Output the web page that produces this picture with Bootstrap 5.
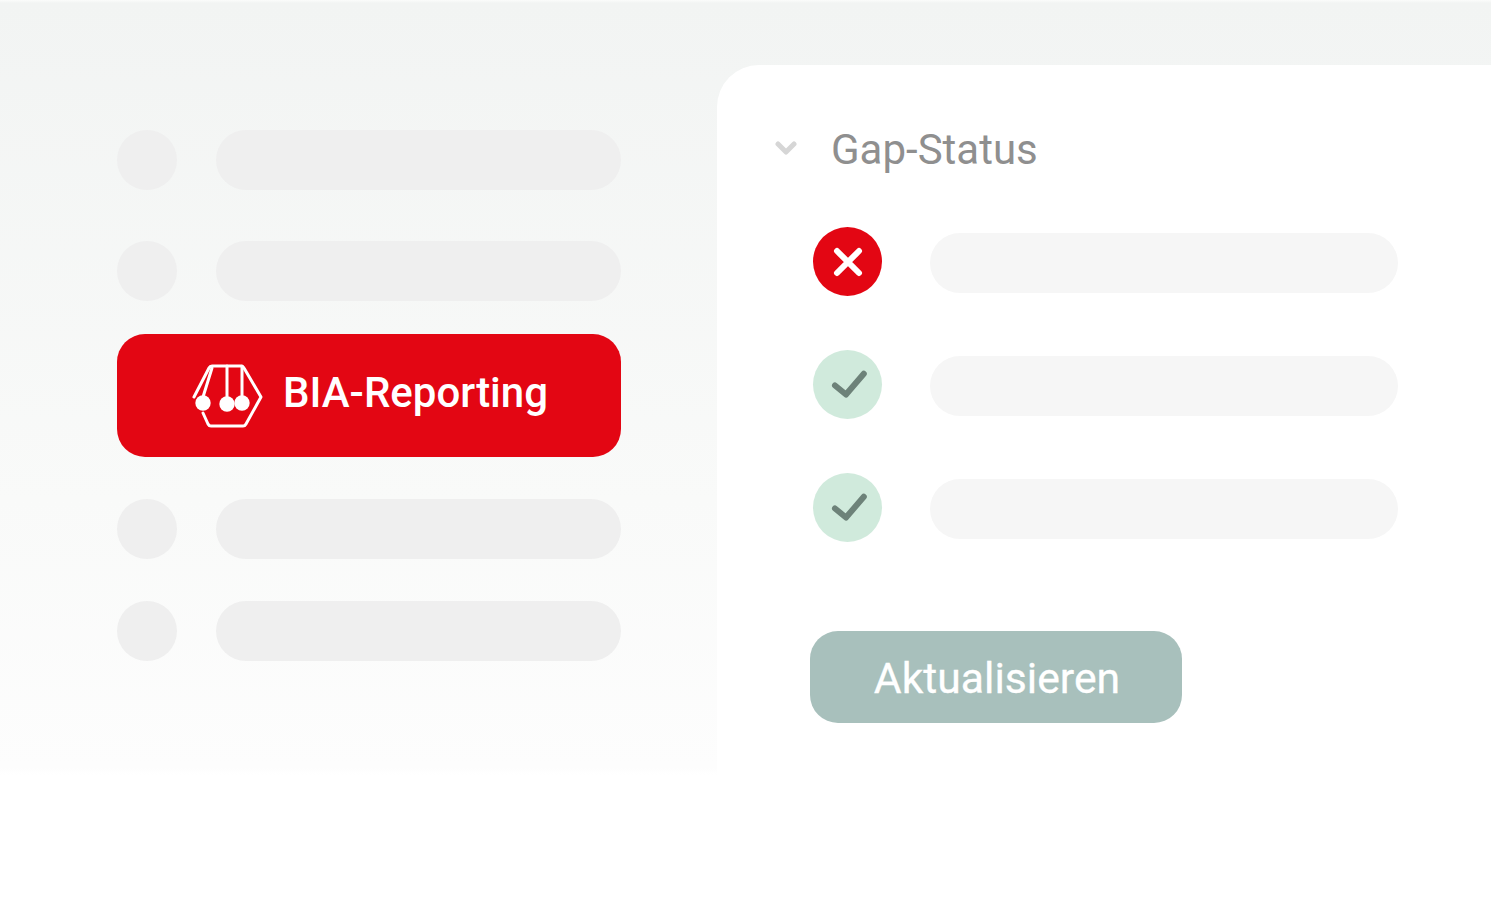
<!DOCTYPE html>
<html lang="de">
  <head>
    <meta charset="UTF-8" />
    <meta name="viewport" content="width=device-width, initial-scale=1.0" />
    <title>BIA-Reporting</title>
    <link
      href="https://cdn.jsdelivr.net/npm/bootstrap@5.3.0/dist/css/bootstrap.min.css"
      rel="stylesheet"
    />
    <style>
      html,
      body {
        height: 100%;
      }

      body {
        background: #fff;
        font-family: Roboto, "Liberation Sans", sans-serif;
        overflow: hidden;
      }

      .stage {
        height: 901px;
        background: linear-gradient(to bottom, #fbfcfb 0, #f2f4f3 3px, #f9faf9 500px, #fdfdfd 768px, #fff 775px);
      }

      .side-col {
        width: 717px;
        padding: 130px 0 0 117px;
      }

      .side-row {
        width: 504px;
        gap: 39px;
        height: 60px;
      }

      .side-dot {
        width: 60px;
        height: 60px;
        border-radius: 50%;
        background: #efefef;
      }

      .side-pill {
        height: 60px;
        border-radius: 30px;
        background: #efefef;
      }

      .gap-a {
        margin-top: 51px;
      }

      .gap-b {
        margin-top: 42px;
      }

      .report-btn {
        width: 504px;
        height: 123px;
        margin-top: 33px;
        margin-bottom: 42px;
        padding: 0 0 0 2px;
        gap: 19px;
        border: 0;
        border-radius: 28px;
        background: #e30613;
        color: #fff;
        font-size: 42px;
        font-weight: 500;
      }

      .report-label {
        margin-top: -6px;
      }

      .status-panel {
        margin-top: 65px;
        padding: 59px 93px 0 58px;
        background: #fff;
        border-top-left-radius: 42px;
      }

      .status-head {
        height: 50px;
        gap: 34px;
        margin-bottom: 53px;
        color: #8f8f8f;
        font-size: 42px;
      }

      .status-row {
        gap: 48px;
        height: 69px;
        margin-left: 38px;
        margin-bottom: 54px;
      }

      .status-icon {
        width: 69px;
        height: 69px;
        border-radius: 50%;
      }

      .status-icon.is-bad {
        background: #e30613;
      }

      .status-icon.is-ok {
        background: #d0eadc;
      }

      .status-pill {
        height: 60px;
        margin-top: 2px;
        border-radius: 30px;
        background: #f6f6f6;
      }

      .update-btn {
        width: 372px;
        height: 92px;
        margin: 89px 0 0 35px;
        padding: 3px 0 0 2px;
        border: 0;
        border-radius: 28px;
        background: #a8c0bc;
        color: #fff;
        font-size: 42.7px;
        font-weight: 400;
        -webkit-text-stroke: 0.3px #fff;
      }
    </style>
  </head>
  <body>
    <div class="stage d-flex">
      <div class="side-col flex-shrink-0">
        <div class="side-row d-flex">
          <div class="side-dot flex-shrink-0"></div>
          <div class="side-pill flex-grow-1"></div>
        </div>
        <div class="side-row d-flex gap-a">
          <div class="side-dot flex-shrink-0"></div>
          <div class="side-pill flex-grow-1"></div>
        </div>
        <button class="report-btn d-flex align-items-center justify-content-center" type="button">
          <svg width="72" height="66" viewBox="0 0 72 66" fill="none" stroke="#fff" stroke-width="3" stroke-linejoin="round" stroke-linecap="round">
            <path d="M2 34 L17 5 Q18 3 20 3 L49 3 Q51 3 52 5 L69 34 L54 61 Q53 63 51 63 L19 63 Q17 63 16 61 L11 50" />
            <path d="M20 5 L11 34 M35 3 L35 34 M50 3 L50 34" />
            <circle cx="11" cy="40" r="7.7" fill="#fff" stroke="none" />
            <circle cx="35" cy="41" r="7.7" fill="#fff" stroke="none" />
            <circle cx="50" cy="40" r="7.7" fill="#fff" stroke="none" />
          </svg>
          <span class="report-label">BIA-Reporting</span>
        </button>
        <div class="side-row d-flex">
          <div class="side-dot flex-shrink-0"></div>
          <div class="side-pill flex-grow-1"></div>
        </div>
        <div class="side-row d-flex gap-b">
          <div class="side-dot flex-shrink-0"></div>
          <div class="side-pill flex-grow-1"></div>
        </div>
      </div>

      <div class="status-panel flex-grow-1">
        <div class="status-head d-flex align-items-center">
          <svg width="22" height="16" viewBox="0 0 22 16" fill="none" stroke="#d6d6d6" stroke-width="5" stroke-linecap="round" stroke-linejoin="round">
            <path d="M3 3 L11 11 L19 3" />
          </svg>
          <span>Gap-Status</span>
        </div>

        <div class="status-row d-flex align-items-center">
          <div class="status-icon is-bad flex-shrink-0 d-flex align-items-center justify-content-center">
            <svg width="32" height="32" viewBox="0 0 32 32" fill="none" stroke="#fff" stroke-width="6" stroke-linecap="round">
              <path d="M5 5 L27 27 M27 5 L5 27" />
            </svg>
          </div>
          <div class="status-pill flex-grow-1"></div>
        </div>
        <div class="status-row d-flex align-items-center">
          <div class="status-icon is-ok flex-shrink-0 d-flex align-items-center justify-content-center">
            <svg width="42" height="30" viewBox="0 0 42 30" fill="none" stroke="#6d8279" stroke-width="6" stroke-linecap="round" stroke-linejoin="round">
              <path d="M8 15.5 L19 24.5 L36.8 3.8" />
            </svg>
          </div>
          <div class="status-pill flex-grow-1"></div>
        </div>
        <div class="status-row d-flex align-items-center">
          <div class="status-icon is-ok flex-shrink-0 d-flex align-items-center justify-content-center">
            <svg width="42" height="30" viewBox="0 0 42 30" fill="none" stroke="#6d8279" stroke-width="6" stroke-linecap="round" stroke-linejoin="round">
              <path d="M8 15.5 L19 24.5 L36.8 3.8" />
            </svg>
          </div>
          <div class="status-pill flex-grow-1"></div>
        </div>

        <button class="update-btn d-block" type="button">Aktualisieren</button>
      </div>
    </div>

    <script src="https://cdn.jsdelivr.net/npm/bootstrap@5.3.0/dist/js/bootstrap.bundle.min.js"></script>
  </body>
</html>
